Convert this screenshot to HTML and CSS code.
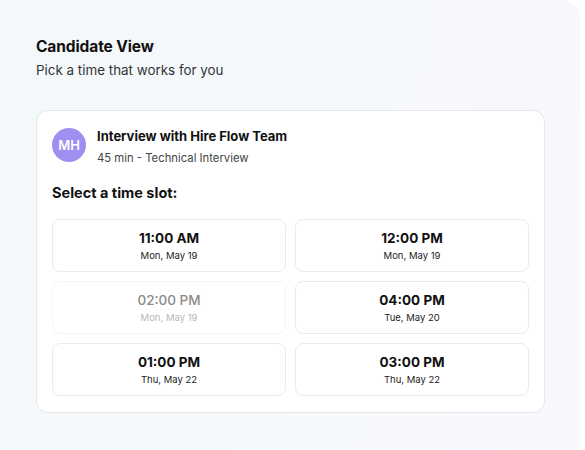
FILE: index.html
```html
<!DOCTYPE html>
<html lang="en">

<head>
    <meta charset="UTF-8">
    <meta name="viewport" content="width=device-width, initial-scale=1.0">
    <title>Candidate View</title>

    <link rel="stylesheet" href="styles.css">
</head>

<body>

    <div class="panel">
        <h2 class="title">Candidate View</h2>
        <p class="subtitle">Pick a time that works for you</p>

        <div class="card">
            <div class="host">
                <div class="avatar">MH</div>
                <div>
                    <div class="host-name">Interview with Hire Flow Team</div>
                    <div class="host-meta">45 min - Technical Interview</div>
                </div>
            </div>

            <div class="label">Select a time slot:</div>

            <div class="slots">
                <button class="slot">
                    <span class="time">11:00 AM</span>
                    <span class="date">Mon, May 19</span>
                </button>
                <button class="slot">
                    <span class="time">12:00 PM</span>
                    <span class="date">Mon, May 19</span>
                </button>
                <button class="slot disabled" disabled>
                    <span class="time">02:00 PM</span>
                    <span class="date">Mon, May 19</span>
                </button>
                <button class="slot">
                    <span class="time">04:00 PM</span>
                    <span class="date">Tue, May 20</span>
                </button>
                <button class="slot">
                    <span class="time">01:00 PM</span>
                    <span class="date">Thu, May 22</span>
                </button>
                <button class="slot">
                    <span class="time">03:00 PM</span>
                    <span class="date">Thu, May 22</span>
                </button>
            </div>
        </div>
    </div>

</body>

</html>
```

FILE: styles.css
```css
body {
    margin: 0;
    background: #ffffff;
    font-family: Inter, "Noto Sans", sans-serif;
    color: #111111;
}

.panel {
    width: 580px;
    height: 450px;
    box-sizing: border-box;
    padding: 37px 36px 0 36px;
    border-radius: 0 18px 0 0;
    background: linear-gradient(100deg, #f3f8fb 0%, #f6f9fc 50%, #f8f8fd 100%);
}

.title {
    margin: 0;
    font-size: 15.5px;
    font-weight: 700;
    line-height: 20px;
    letter-spacing: -0.1px;
}

.subtitle {
    margin: 4px 0 0 0;
    font-size: 13.4px;
    line-height: 18px;
    color: #333333;
}

.card {
    margin-top: 31px;
    width: 509px;
    box-sizing: border-box;
    padding: 17px 15px 16px 15px;
    background: #ffffff;
    border: 1px solid #e4e6ea;
    border-radius: 12px;
}

.host {
    display: flex;
    align-items: flex-start;
    gap: 11px;
}

.avatar {
    width: 34px;
    height: 34px;
    border-radius: 50%;
    background: #9e8ff0;
    color: #ffffff;
    font-size: 13px;
    font-weight: 600;
    display: flex;
    align-items: center;
    justify-content: center;
    flex-shrink: 0;
}

.host-name {
    font-size: 13px;
    font-weight: 700;
    line-height: 18px;
    margin-top: -1px;
}

.host-meta {
    font-size: 11.3px;
    color: #444444;
    margin-top: 6px;
}

.label {
    margin-top: 19px;
    font-size: 14.5px;
    font-weight: 700;
}

.slots {
    margin-top: 18px;
    display: grid;
    grid-template-columns: 1fr 1fr;
    gap: 9px;
}

.slot {
    height: 53px;
    display: flex;
    flex-direction: column;
    align-items: center;
    justify-content: center;
    gap: 4px;
    background: #ffffff;
    border: 1px solid #ebebed;
    border-radius: 8px;
    font-family: inherit;
    cursor: pointer;
}

.time {
    font-size: 13.5px;
    font-weight: 700;
    color: #111111;
}

.date {
    font-size: 9.5px;
    color: #222222;
}

.slot.disabled {
    border-color: #f5f5f6;
    cursor: default;
}

.slot.disabled .time {
    font-weight: 500;
    color: #8a8a8a;
}

.slot.disabled .date {
    color: #b8b8b8;
}
```
